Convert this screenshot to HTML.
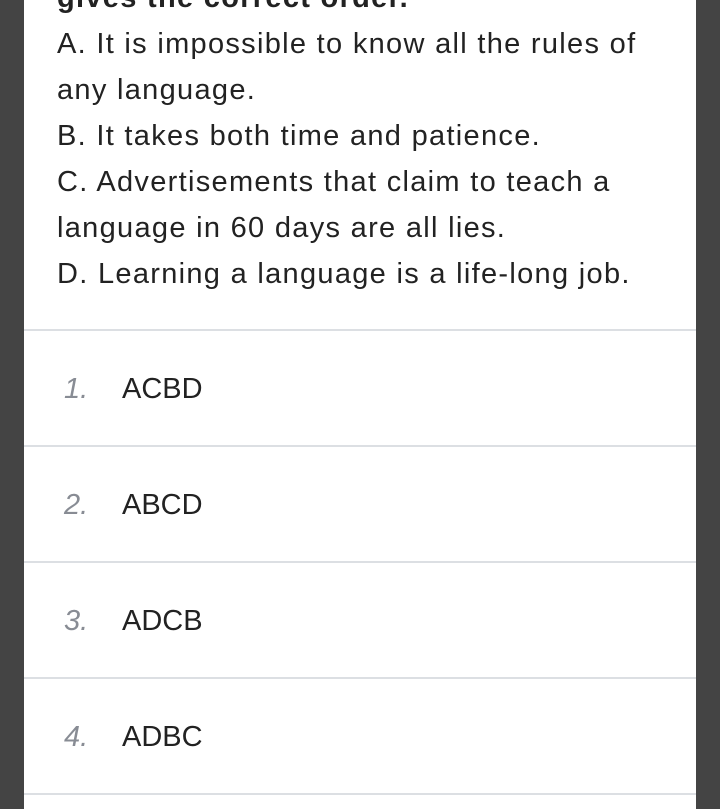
<!DOCTYPE html>
<html><head><style>
body{margin:0;width:720px;height:809px;overflow:hidden;background:#444;font-family:"Liberation Sans",Arial,sans-serif}
.card{position:absolute;left:24px;top:0;width:672px;height:809px;background:#fff}
.q{position:absolute;left:33px;top:-25px;width:640px;font-size:29px;letter-spacing:1.3px;line-height:46px;color:#222;white-space:nowrap}
.q b{display:block}
.line{position:absolute;left:0;width:672px;height:2px;background:#dcdfe3}
.opt{position:absolute;left:0;height:116px;width:672px;font-size:29px;color:#222}
.opt .n{position:absolute;left:40px;top:42px;font-style:italic;color:#888c94}
.opt .t{position:absolute;left:98px;top:42px}
</style></head><body>
<div class="card">
<div class="q"><b>gives the correct order.</b>
A. It is impossible to know all the rules of<br>any language.<br>B. It takes both time and patience.<br>C. Advertisements that claim to teach a<br>language in 60 days are all lies.<br>D. Learning a language is a life-long job.</div>
<div class="line" style="top:329px"></div>
<div class="opt" style="top:331px"><span class="n">1.</span><span class="t">ACBD</span></div>
<div class="line" style="top:445px"></div>
<div class="opt" style="top:447px"><span class="n">2.</span><span class="t">ABCD</span></div>
<div class="line" style="top:561px"></div>
<div class="opt" style="top:563px"><span class="n">3.</span><span class="t">ADCB</span></div>
<div class="line" style="top:677px"></div>
<div class="opt" style="top:679px"><span class="n">4.</span><span class="t">ADBC</span></div>
<div class="line" style="top:793px"></div>
</div>
</body></html>
